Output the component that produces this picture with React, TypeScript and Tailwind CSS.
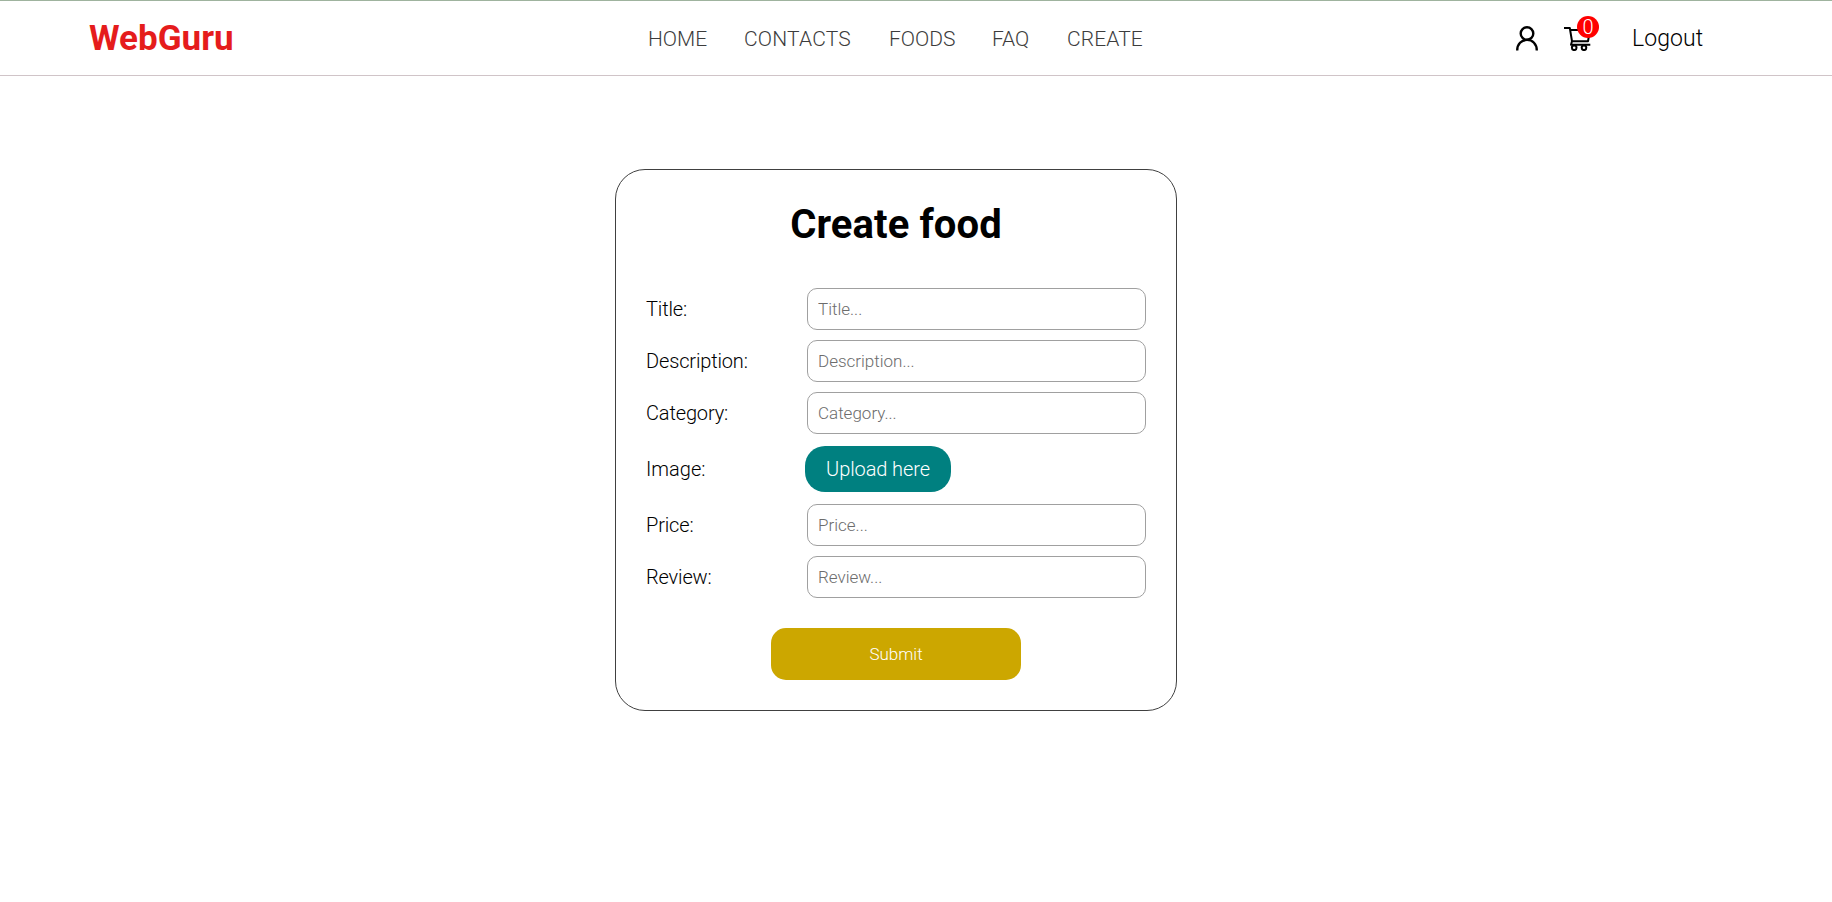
import React from "react";

const links = [
  { label: "HOME", width: "w-[96px]" },
  { label: "CONTACTS", width: "w-[145px] tracking-[0.2px]" },
  { label: "FOODS", width: "w-[103px]" },
  { label: "FAQ", width: "w-[75px]" },
  { label: "CREATE", width: "w-[78px] tracking-[0.1px]" },
];

function UserIcon() {
  return (
    <svg width="22" height="25" viewBox="0 0 22 25" fill="none" stroke="#000" strokeWidth="2.4">
      <circle cx="11" cy="7.5" r="6.3" />
      <path d="M1.2 24.5C1.2 18 5.5 13.9 11 13.9S20.8 18 20.8 24.5" />
    </svg>
  );
}

function CartIcon() {
  return (
    <svg width="28" height="25" viewBox="0 0 28 25" fill="none" stroke="#000" strokeWidth="2">
      <path d="M0 2H5.8L8 15.2H24L26 4H6.2M8 15.2L7 18.8H26.3" strokeLinejoin="round" />
      <circle cx="10.2" cy="21.8" r="2.3" />
      <circle cx="20" cy="21.8" r="2.3" />
    </svg>
  );
}

function Field({ name }: { name: string }) {
  return (
    <label className="flex h-[42px] items-center">
      <span className="w-[161px] text-[20px] tracking-[-0.15px]">{name}:</span>
      <input
        placeholder={`${name}...`}
        className="h-[42px] w-[339px] rounded-[10px] border border-[#a0a0a0] px-[10px] text-[17px] outline-none placeholder:text-[#6c6c6c]"
      />
    </label>
  );
}

export default function App() {
  return (
    <div className="min-h-[902px] bg-white font-[Roboto,sans-serif] font-light text-black">
      <header className="flex h-[76px] items-center border-t border-b border-t-[#9fb39e] border-b-[#d0c4c8] pl-[89px]">
        <div className="w-[559px] text-[35px] leading-[41px] font-bold text-[#e51c1c]">WebGuru</div>
        <nav className="flex w-[867px] pt-[2px] text-[21px] leading-[26px] text-[#3c3c3c]">
          {links.map((l) => (
            <a key={l.label} className={l.width}>{l.label}</a>
          ))}
        </nav>
        <div className="flex items-center">
          <div className="w-[49px] pl-[1px]"><UserIcon /></div>
          <div className="relative w-[68px]">
            <CartIcon />
            <span className="absolute -top-[10px] left-[13px] flex size-[22px] items-center justify-center rounded-full bg-[red] text-[20px] leading-[22px] text-white">0</span>
          </div>
          <a className="pt-[2px] text-[23px] leading-[28px] tracking-[0.1px]">Logout</a>
        </div>
      </header>
      <main className="flex justify-center pt-[93px] pr-[40px]">
        <form className="flex h-[542px] w-[562px] flex-col rounded-[30px] border border-[#404040] px-[30px] pt-[31px]">
          <h1 className="mb-[40px] text-center text-[40px] leading-[47px] font-bold tracking-[0.1px]">Create food</h1>
          <div className="flex flex-col gap-[10px]">
            <Field name="Title" />
            <Field name="Description" />
            <Field name="Category" />
            <div className="my-[2px] flex h-[46px] items-center">
              <span className="w-[159px] text-[20px]">Image:</span>
              <button type="button" className="h-[46px] w-[146px] rounded-[20px] bg-[#008080] text-[20px] tracking-[-0.1px] text-white">Upload here</button>
            </div>
            <Field name="Price" />
            <Field name="Review" />
          </div>
          <button type="button" className="mt-[30px] h-[52px] w-[250px] self-center rounded-[15px] bg-[#cca700] pt-[2px] text-[17px] text-white">Submit</button>
        </form>
      </main>
    </div>
  );
}
